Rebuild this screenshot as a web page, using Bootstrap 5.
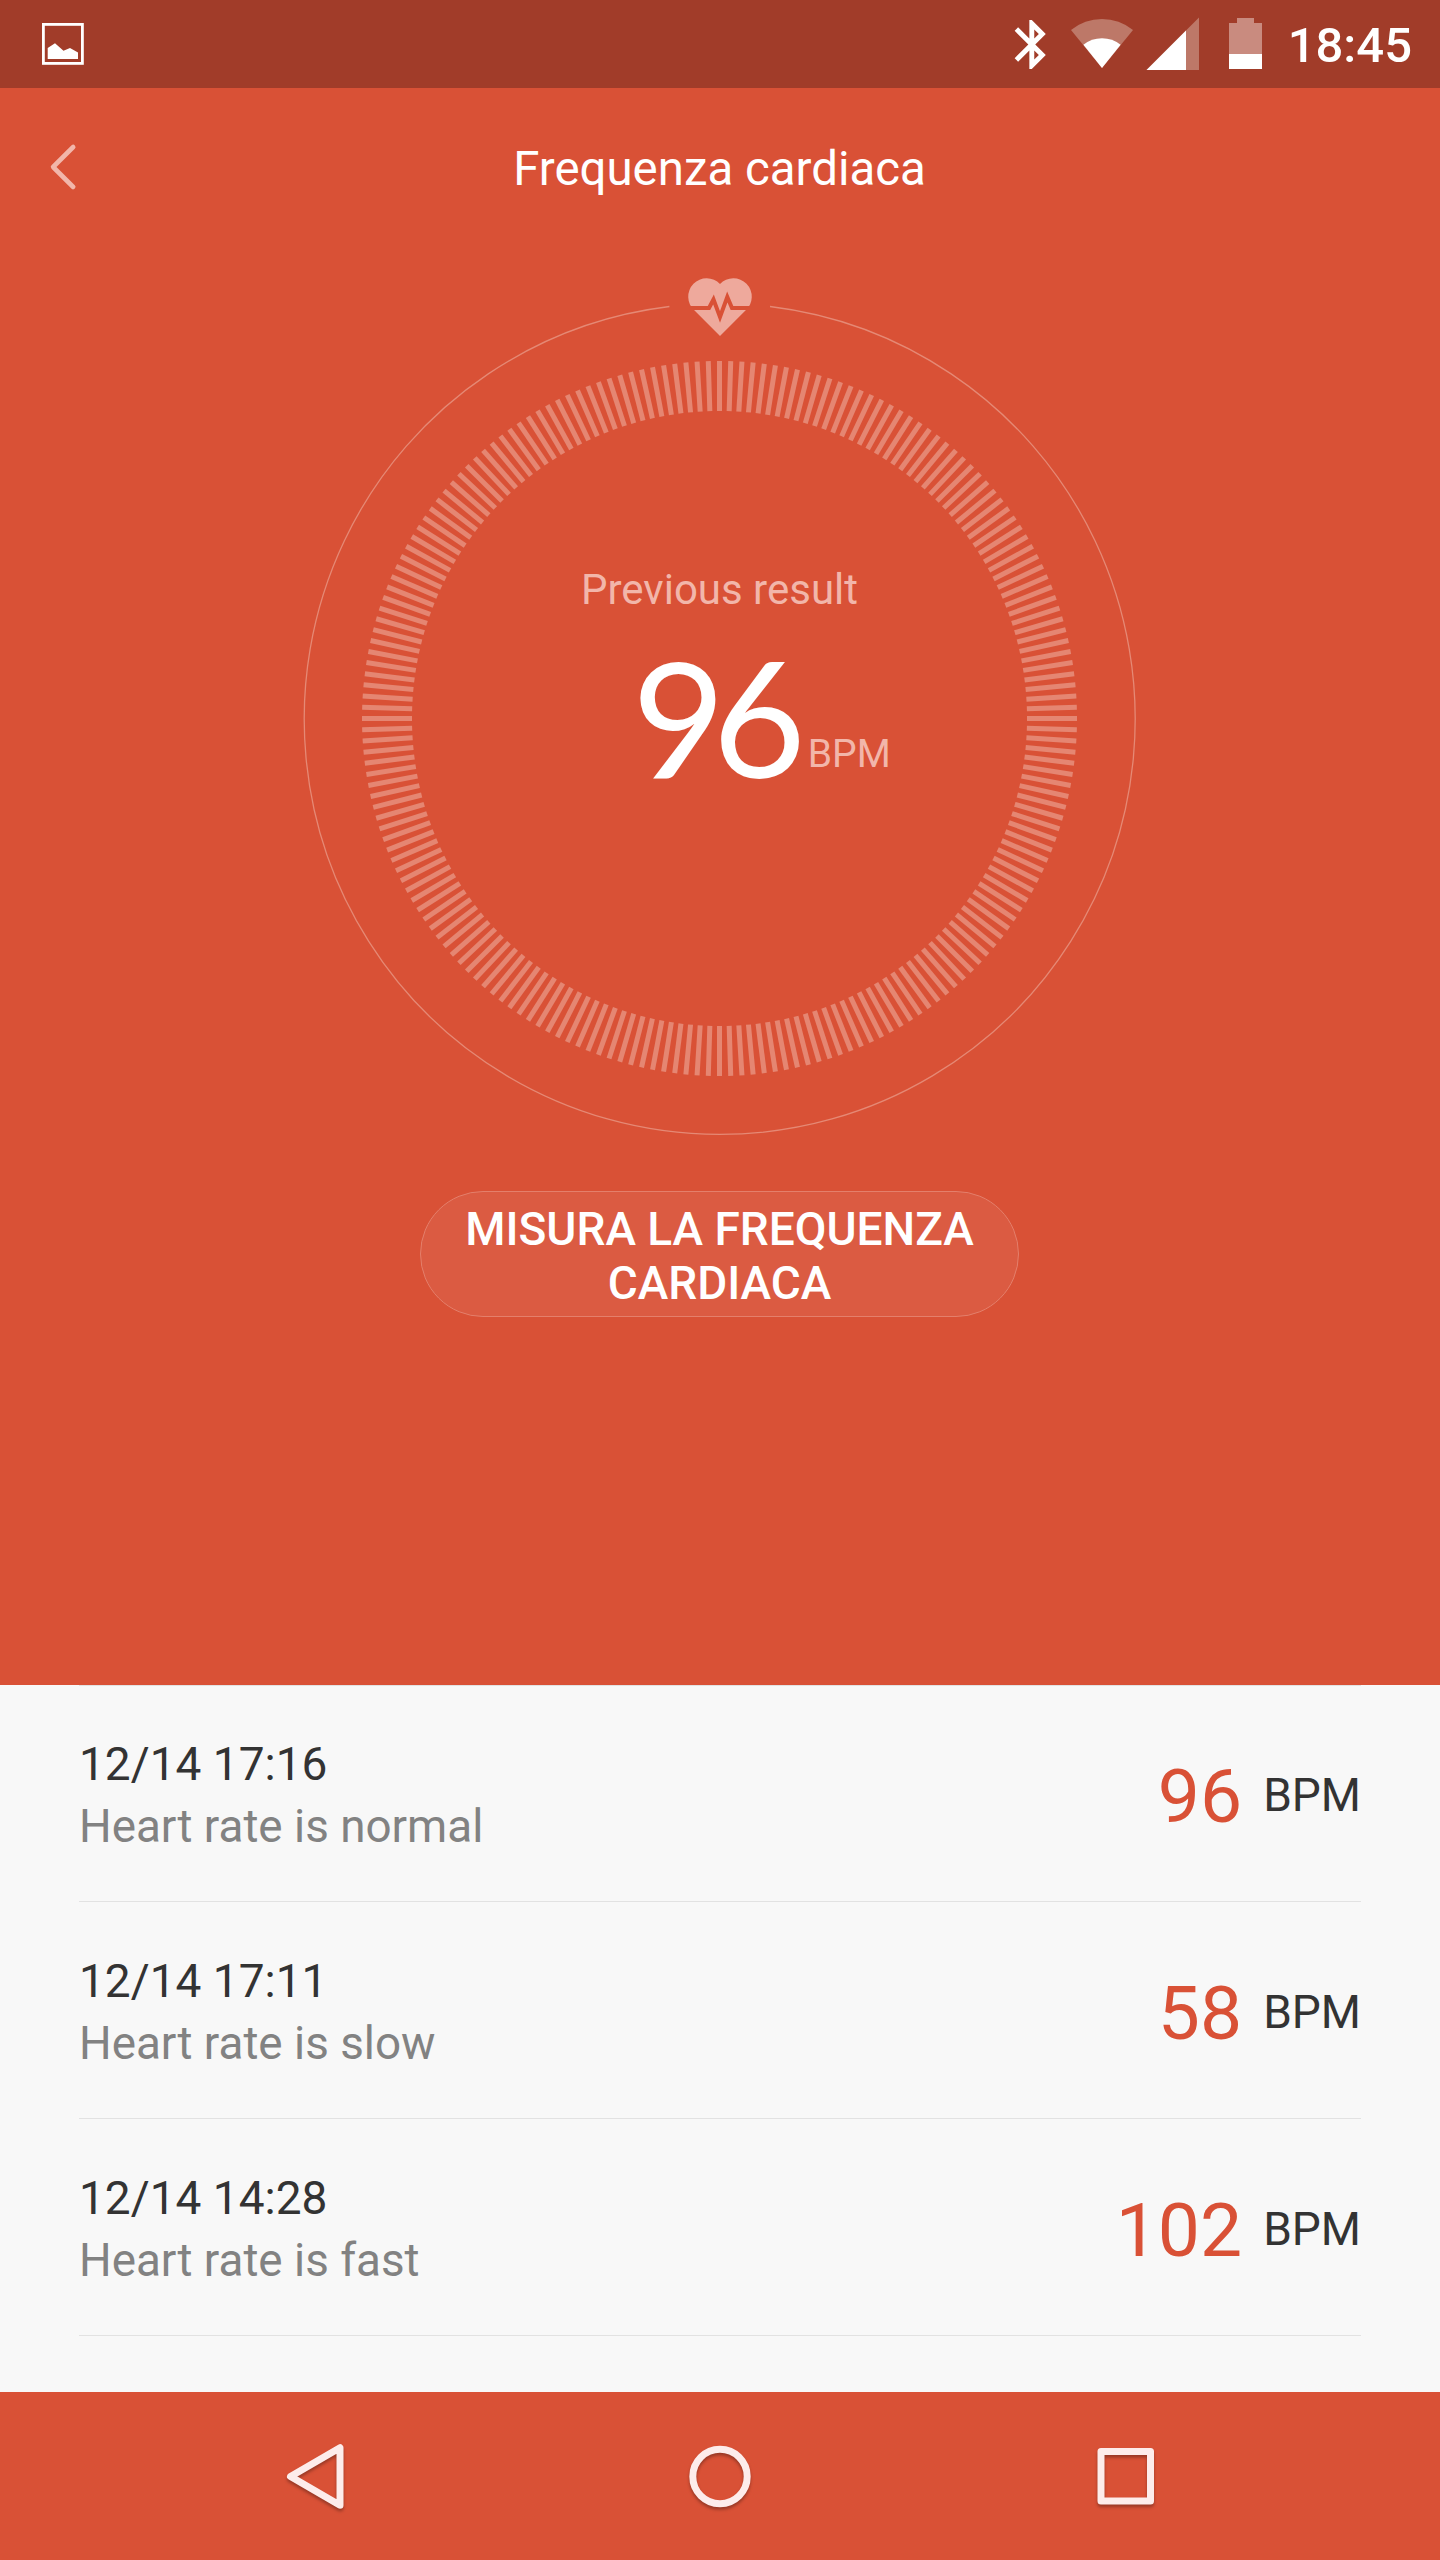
<!DOCTYPE html>
<html lang="it">
<head>
<meta charset="utf-8">
<meta name="viewport" content="width=device-width, initial-scale=1">
<title>Frequenza cardiaca</title>
<link href="https://cdn.jsdelivr.net/npm/bootstrap@5.3.0/dist/css/bootstrap.min.css" rel="stylesheet">
<style>
:root { --brand: #d95136; }
body { font-family: Roboto, "Liberation Sans", sans-serif; background: #f8f8f8; color: #333; }
svg { display: block; flex: none; }
.screen { width: 1440px; height: 2560px; overflow: hidden; }
.statusbar { height: 88px; background: #a13c29; padding: 0 28px 0 0; }
.clock { font-size: 49px; font-weight: 500; line-height: 88px; padding-top: 4px; }
.hero { height: 1597px; background: var(--brand); }
.appbar { height: 160px; }
.appbar-title { font-size: 47.4px; line-height: 162px; margin-right: 121px; padding-top: 2px; }
.back-btn { width: 120px; }
.gauge { height: 943px; }
.gauge-text { position: absolute; inset: 0; padding-top: 312px; }
.dim { color: #f2b6aa; }
.prev { font-size: 42px; line-height: 60px; padding-right: 1px; }
.reading { padding-left: 362px; }
.bignum { font-family: Lato, sans-serif; font-size: 161px; line-height: 190px; letter-spacing: -13px; margin-top: 1px; }
.unit { font-size: 39px; line-height: 60px; padding-left: 15px; margin-top: 104px; }
.measure { width: 599px; height: 126px; margin-right: 1px; color: #fff; background: #db5b42; border: 1px solid #e47f6b; font-size: 46px; font-weight: 500; line-height: 54px; }
.records { height: 707px; padding: 0 79px; }
.record { height: 217px; border-top: 1px solid #e2e2e2; padding-top: 4px; }
.record:first-child { height: 216px; padding-top: 3px; }
.record:last-child { border-bottom: 1px solid #e2e2e2; height: 218px; }
.when { font-size: 46px; line-height: 62px; }
.note { font-size: 45.8px; line-height: 64px; margin-bottom: -2px; color: #828282; }
.rate { color: var(--brand); font-size: 75px; line-height: 90px; padding-top: 1px; }
.rate-unit { font-size: 46px; padding-left: 21px; padding-top: 1px; }
.navbtns { height: 168px; background: var(--brand); }
</style>
</head>
<body>
<div class="screen d-flex flex-column">
  <header class="statusbar d-flex align-items-center text-white">
    <svg class="me-auto" width="120" height="88" viewBox="0 0 120 88"><rect x="43.400" y="24.400" width="39" height="39" fill="none" stroke="#fff" stroke-width="2.800"/><path fill="#fff" d="M47.700 48 55 43.300l8.500 7.500L70 48l8 4.500V59H47.700z"/></svg>
    <svg width="59" height="88" viewBox="1002 0 59 88"><path fill="#fff" transform="translate(1002.4 15.1) scale(2.45)" d="M17.71 7.71L12 2h-1v7.59L6.41 5 5 6.41 10.59 12 5 17.59 6.41 19 11 14.41V22h1l5.71-5.71-4.3-4.29 4.3-4.29zM13 5.83l1.88 1.88L13 9.59V5.83zm1.88 10.46L13 18.17v-3.76l1.88 1.88z"/></svg>
    <svg width="82" height="88" viewBox="1061 0 82 88"><path fill="#bd7868" d="M1102 68 1071 30a49 49 0 0 1 62 0z"/><path fill="#fff" d="M1102 68 1083.400 44.700a30 30 0 0 1 37.200 0z"/></svg>
    <svg width="71" height="88" viewBox="1143 0 71 88"><path fill="#bd7868" d="M1146.500 70H1199V17.500z"/><path fill="#fff" d="M1146.500 70H1186V30.500z"/></svg>
    <svg width="74" height="88" viewBox="1214 0 74 88"><path fill="#c98b7f" d="M1229 54V23h8v-5h17v5h8v31z"/><path fill="#fff" d="M1229 54h33v15h-33z"/></svg>
    <span class="clock">18:45</span>
  </header>

  <main class="hero d-flex flex-column align-items-center">
    <div class="appbar d-flex align-items-center w-100">
      <a class="back-btn" href="#" aria-label="Indietro"><svg width="120" height="160" viewBox="0 88 120 160"><path d="M73.200 147 53.100 167l20.100 20" fill="none" stroke="#f2b6aa" stroke-width="4.600" stroke-linecap="round" stroke-linejoin="round"/></svg></a>
      <h1 class="appbar-title flex-grow-1 text-center text-white fw-normal mb-0">Frequenza cardiaca</h1>
    </div>
    <section class="gauge position-relative">
      <svg width="900" height="943" viewBox="270 248 900 943">
        <path d="M770 306.500A415.500 415.500 0 1 1 669.400 306.500" fill="none" stroke="#e58975" stroke-width="1.300"/>
        <g id="ticks" stroke="#e58672" stroke-width="5"></g>
        <path fill="#eea99c" d="M720 336 694.300 310.300A18.400 18.400 0 1 1 720 284A18.400 18.400 0 1 1 745.700 310.300z"/>
        <path d="M684 308h25l4.500-8.500L720 317l7.300-20 4.700 11h24" fill="none" stroke="#d95136" stroke-width="4" stroke-miterlimit="10"/>
      </svg>
      <div class="gauge-text">
        <div class="prev dim text-center">Previous result</div>
        <div class="reading d-flex align-items-start"><span class="bignum text-white">96</span><span class="unit dim">BPM</span></div>
      </div>
    </section>
    <button class="measure btn rounded-pill p-0 pt-1" type="button">MISURA LA FREQUENZA<br>CARDIACA</button>
  </main>

  <section class="records">
    <div class="record d-flex justify-content-between align-items-center">
      <div><div class="when">12/14 17:16</div><div class="note">Heart rate is normal</div></div>
      <div class="d-flex align-items-center"><span class="rate">96</span><span class="rate-unit">BPM</span></div>
    </div>
    <div class="record d-flex justify-content-between align-items-center">
      <div><div class="when">12/14 17:11</div><div class="note">Heart rate is slow</div></div>
      <div class="d-flex align-items-center"><span class="rate">58</span><span class="rate-unit">BPM</span></div>
    </div>
    <div class="record d-flex justify-content-between align-items-center">
      <div><div class="when">12/14 14:28</div><div class="note">Heart rate is fast</div></div>
      <div class="d-flex align-items-center"><span class="rate">102</span><span class="rate-unit">BPM</span></div>
    </div>
  </section>

  <nav class="navbtns d-flex justify-content-center">
    <svg width="1440" height="168" viewBox="0 2392 1440 168">
      <defs><filter id="drop" x="-20%" y="-20%" width="140%" height="150%" color-interpolation-filters="sRGB"><feDropShadow dx="0" dy="2.500" stdDeviation="1.500" flood-color="#000" flood-opacity=".3"/></filter></defs>
      <g fill="none" stroke="#fdeceb" stroke-width="7" stroke-linejoin="round" filter="url(#drop)">
        <path d="M290.500 2476.500 340 2447.700v57.600z"/>
        <circle cx="720" cy="2476.500" r="27.200"/>
        <rect x="1101" y="2451.500" width="49.500" height="49.500"/>
      </g>
    </svg>
  </nav>
</div>
<script>
  // 200 marks, one every 1.8 degrees
  const ticks = document.getElementById('ticks');
  for (let i = 0; i < 200; i++) {
    const line = document.createElementNS('http://www.w3.org/2000/svg', 'line');
    line.setAttribute('x1', 719.5); line.setAttribute('x2', 719.5);
    line.setAttribute('y1', 361); line.setAttribute('y2', 411);
    line.setAttribute('transform', `rotate(${i * 1.8} 719.5 718.5)`);
    ticks.appendChild(line);
  }
</script>
<script src="https://cdn.jsdelivr.net/npm/bootstrap@5.3.0/dist/js/bootstrap.bundle.min.js"></script>
</body>
</html>
